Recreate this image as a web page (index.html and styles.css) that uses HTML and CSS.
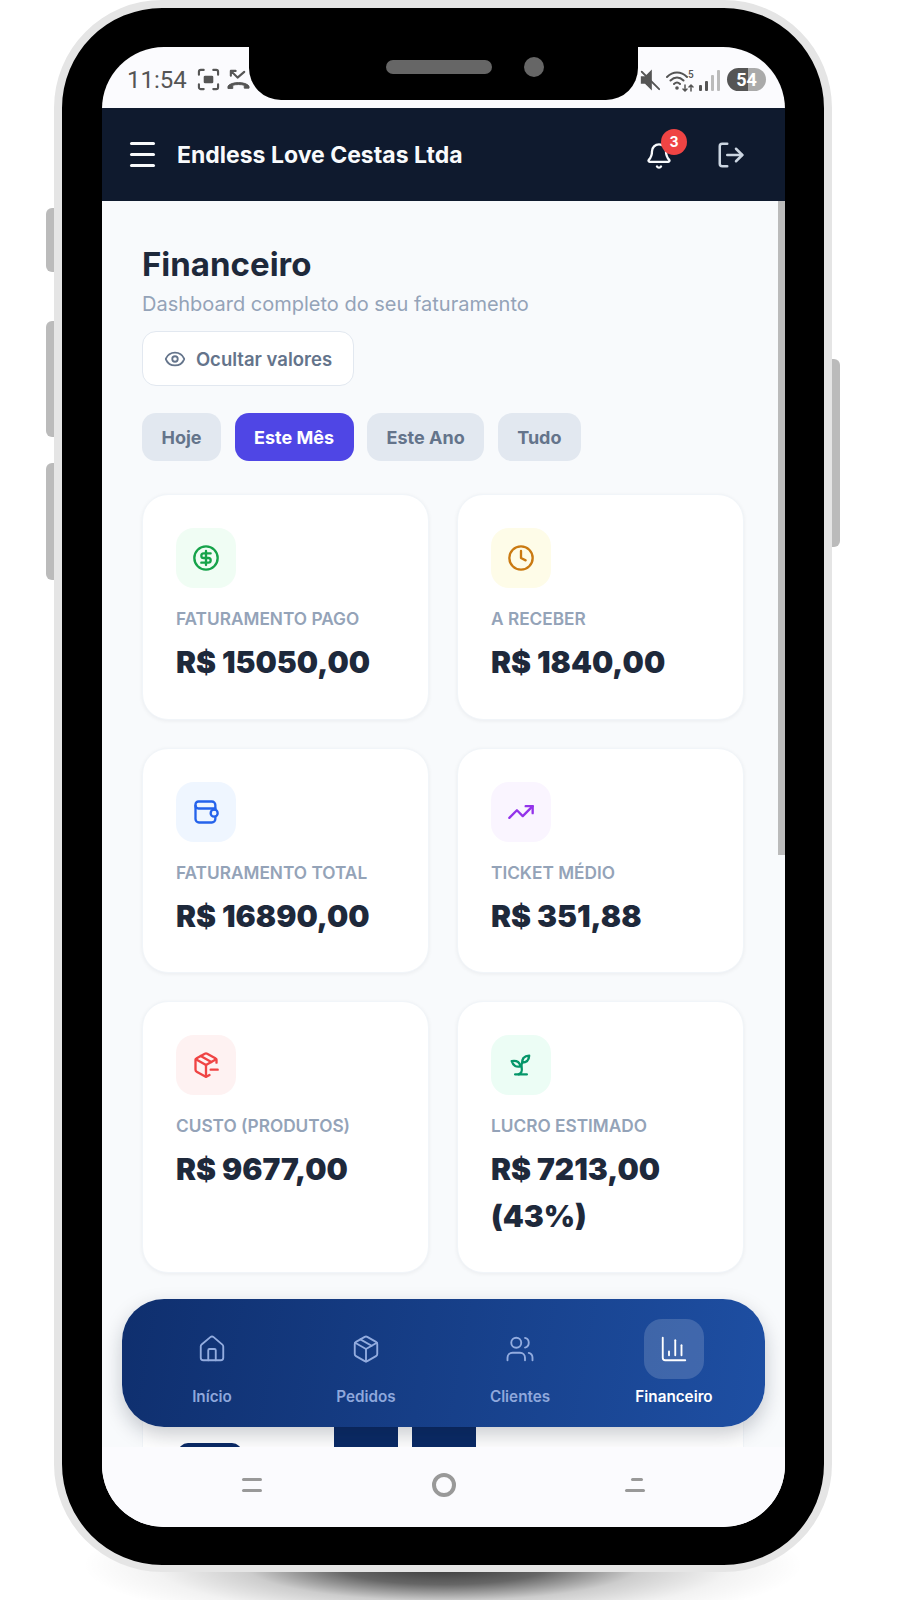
FILE: index.html
```html
<!DOCTYPE html>
<html lang="pt-BR">
<head>
    <meta charset="UTF-8">
    <meta name="viewport" content="width=device-width, initial-scale=1.0">
    <title>Financeiro</title>
    <link rel="stylesheet" href="styles.css">
</head>
<body>
    <div class="floor-shadow"></div>
    <div class="side-btn side-btn-a"></div>
    <div class="side-btn side-btn-b"></div>
    <div class="side-btn side-btn-c"></div>
    <div class="side-btn side-btn-d"></div>

    <div class="phone">
        <div class="screen">
            <div class="notch">
                <span class="speaker"></span>
                <span class="camera"></span>
            </div>

            <div class="status-bar">
                <div class="status-left">
                    <span class="clock">11:54</span>
                    <svg class="status-icon" viewBox="0 0 24 24" fill="none" stroke="#555" stroke-width="2.2" stroke-linecap="round">
                        <path d="M2 7V4a2 2 0 0 1 2-2h3M17 2h3a2 2 0 0 1 2 2v3M22 17v3a2 2 0 0 1-2 2h-3M7 22H4a2 2 0 0 1-2-2v-3"/>
                        <rect x="7" y="8" width="10" height="8" rx="1.5" fill="#555" stroke="none"/>
                    </svg>
                    <svg class="status-icon" viewBox="0 0 24 24" fill="none" stroke="#555" stroke-width="2.2" stroke-linecap="round" stroke-linejoin="round">
                        <path d="M4 3l7 7 7-6M4 3v5M4 3h5"/>
                        <path d="M1 21v-2c3-5 19-5 22 0v2h-5v-3c-3-1-9-1-12 0v3z" fill="#555" stroke-width="1"/>
                    </svg>
                </div>
                <div class="status-right">
                    <svg class="mute-icon" viewBox="0 0 24 24" fill="#555" stroke="#555" stroke-width="2" stroke-linecap="round">
                        <path d="M3 9v6h4l6 6V3L7 9z"/>
                        <path d="M3 3l19 19"/>
                    </svg>
                    <svg class="wifi-icon" viewBox="0 0 30 24" fill="none" stroke="#555" stroke-width="2" stroke-linecap="round">
                        <path d="M1 9c6-6 14-6 20 0M4.500 12.500c4-4 9-4 13 0M8 16c2-2 4-2 6 0"/>
                        <circle cx="11" cy="20" r="1.800" fill="#555" stroke="none"/>
                        <path d="M19 17v6M17 21l2 2 2-2M25 23v-6M23 19l2-2 2 2" stroke-width="1.500"/>
                        <text x="22" y="10" class="wifi-five">5</text>
                    </svg>
                    <div class="signal">
                        <span class="signal-bar signal-on signal-h1"></span>
                        <span class="signal-bar signal-on signal-h2"></span>
                        <span class="signal-bar signal-h3"></span>
                        <span class="signal-bar signal-h4"></span>
                    </div>
                    <div class="battery">54</div>
                </div>
            </div>

            <header class="topbar">
                <div class="burger"><span></span><span></span><span></span></div>
                <div class="company">Endless Love Cestas Ltda</div>
                <div class="bell">
                    <svg viewBox="0 0 24 24" fill="none" stroke="#f8fafc" stroke-width="2" stroke-linecap="round" stroke-linejoin="round">
                        <path d="M10.268 21a2 2 0 0 0 3.464 0"/>
                        <path d="M3.262 15.326A1 1 0 0 0 4 17h16a1 1 0 0 0 .74-1.673C19.410 13.956 18 12.499 18 8A6 6 0 0 0 6 8c0 4.499-1.411 5.956-2.738 7.326"/>
                    </svg>
                    <span class="badge">3</span>
                </div>
                <svg class="logout" viewBox="0 0 24 24" fill="none" stroke="#cbd5e1" stroke-width="2" stroke-linecap="round" stroke-linejoin="round">
                    <path d="M9 21H5a2 2 0 0 1-2-2V5a2 2 0 0 1 2-2h4"/>
                    <polyline points="16 17 21 12 16 7"/>
                    <line x1="21" y1="12" x2="9" y2="12"/>
                </svg>
            </header>

            <main class="content">
                <h1 class="page-title">Financeiro</h1>
                <p class="page-sub">Dashboard completo do seu faturamento</p>
                <button class="toggle-values">
                    <svg viewBox="0 0 24 24" fill="none" stroke="#64748b" stroke-width="2" stroke-linecap="round" stroke-linejoin="round">
                        <path d="M2.062 12.348a1 1 0 0 1 0-.696 10.750 10.750 0 0 1 19.876 0 1 1 0 0 1 0 .696 10.750 10.750 0 0 1-19.876 0"/>
                        <circle cx="12" cy="12" r="3"/>
                    </svg>
                    Ocultar valores
                </button>

                <div class="filters">
                    <button class="filter">Hoje</button>
                    <button class="filter filter-active">Este Mês</button>
                    <button class="filter">Este Ano</button>
                    <button class="filter">Tudo</button>
                </div>

                <div class="cards">
                    <div class="card">
                        <div class="tile tile-green">
                            <svg viewBox="0 0 24 24" fill="none" stroke="#16a34a" stroke-width="2" stroke-linecap="round" stroke-linejoin="round">
                                <circle cx="12" cy="12" r="10"/>
                                <path d="M16 8h-6a2 2 0 1 0 0 4h4a2 2 0 1 1 0 4H8"/>
                                <path d="M12 18V6"/>
                            </svg>
                        </div>
                        <div class="card-label">Faturamento Pago</div>
                        <div class="card-value">R$ 15050,00</div>
                    </div>
                    <div class="card">
                        <div class="tile tile-yellow">
                            <svg viewBox="0 0 24 24" fill="none" stroke="#ca7a12" stroke-width="2" stroke-linecap="round" stroke-linejoin="round">
                                <circle cx="12" cy="12" r="10"/>
                                <polyline points="12 6 12 12 16 14"/>
                            </svg>
                        </div>
                        <div class="card-label">A Receber</div>
                        <div class="card-value">R$ 1840,00</div>
                    </div>
                    <div class="card">
                        <div class="tile tile-blue">
                            <svg viewBox="0 0 24 24" fill="none" stroke="#2563eb" stroke-width="2" stroke-linecap="round" stroke-linejoin="round">
                                <path d="M20 10V6a3 3 0 0 0-3-3H5.500A2.500 2.500 0 0 0 3 5.500V18a3 3 0 0 0 3 3h11a3 3 0 0 0 3-3v-2"/>
                                <path d="M3 6.500A2.500 2.500 0 0 0 5.500 9H20"/>
                                <rect x="16" y="10" width="6" height="6" rx="3"/>
                            </svg>
                        </div>
                        <div class="card-label">Faturamento Total</div>
                        <div class="card-value">R$ 16890,00</div>
                    </div>
                    <div class="card">
                        <div class="tile tile-purple">
                            <svg viewBox="0 0 24 24" fill="none" stroke="#9333ea" stroke-width="2" stroke-linecap="round" stroke-linejoin="round">
                                <polyline points="22 7 13.500 15.500 8.500 10.500 2 17"/>
                                <polyline points="16 7 22 7 22 13"/>
                            </svg>
                        </div>
                        <div class="card-label">Ticket Médio</div>
                        <div class="card-value">R$ 351,88</div>
                    </div>
                    <div class="card">
                        <div class="tile tile-red">
                            <svg viewBox="0 0 24 24" fill="none" stroke="#ef4444" stroke-width="2" stroke-linecap="round" stroke-linejoin="round">
                                <path d="M16 16h6"/>
                                <path d="M21 10V8a2 2 0 0 0-1-1.730l-7-4a2 2 0 0 0-2 0l-7 4A2 2 0 0 0 3 8v8a2 2 0 0 0 1 1.730l7 4a2 2 0 0 0 2 0l2-1.140"/>
                                <path d="m7.500 4.270 9 5.150"/>
                                <polyline points="3.290 7 12 12 20.710 7"/>
                                <line x1="12" y1="22" x2="12" y2="12"/>
                            </svg>
                        </div>
                        <div class="card-label">Custo (Produtos)</div>
                        <div class="card-value">R$ 9677,00</div>
                    </div>
                    <div class="card">
                        <div class="tile tile-emerald">
                            <svg viewBox="0 0 24 24" fill="none" stroke="#059669" stroke-width="2" stroke-linecap="round" stroke-linejoin="round">
                                <path d="M7 20h10"/>
                                <path d="M10 20c5.500-2.500.8-6.400 3-10"/>
                                <path d="M9.500 9.400c1.100.8 1.800 2.200 2.300 3.700-2 .4-3.500.4-4.800-.3-1.200-.6-2.300-1.900-3-4.200 2.800-.5 4.400 0 5.500.8z"/>
                                <path d="M14.100 6a7 7 0 0 0-1.100 4c1.900-.1 3.300-.6 4.300-1.400 1-1 1.600-2.300 1.700-4.600-2.700.1-4 1-4.900 2z"/>
                            </svg>
                        </div>
                        <div class="card-label">Lucro Estimado</div>
                        <div class="card-value">R$ 7213,00 (43%)</div>
                    </div>
                </div>

                <div class="chart-card">
                    <div class="chart">
                        <div class="chart-bar" style="height: 80px"></div>
                        <div class="chart-bar" style="height: 0"></div>
                        <div class="chart-bar" style="height: 130px"></div>
                        <div class="chart-bar" style="height: 130px"></div>
                    </div>
                </div>
            </main>

            <div class="scrollbar"></div>

            <nav class="bottom-nav">
                <div class="nav-item">
                    <span class="nav-icon">
                        <svg viewBox="0 0 24 24"><path d="M15 21v-8a1 1 0 0 0-1-1h-4a1 1 0 0 0-1 1v8"/><path d="M3 10a2 2 0 0 1 .709-1.528l7-5.999a2 2 0 0 1 2.582 0l7 5.999A2 2 0 0 1 21 10v9a2 2 0 0 1-2 2H5a2 2 0 0 1-2-2z"/></svg>
                    </span>
                    <span class="nav-label">Início</span>
                </div>
                <div class="nav-item">
                    <span class="nav-icon">
                        <svg viewBox="0 0 24 24"><path d="M11 21.730a2 2 0 0 0 2 0l7-4A2 2 0 0 0 21 16V8a2 2 0 0 0-1-1.730l-7-4a2 2 0 0 0-2 0l-7 4A2 2 0 0 0 3 8v8a2 2 0 0 0 1 1.730z"/><path d="M12 22V12"/><polyline points="3.290 7 12 12 20.710 7"/><path d="m7.500 4.270 9 5.150"/></svg>
                    </span>
                    <span class="nav-label">Pedidos</span>
                </div>
                <div class="nav-item">
                    <span class="nav-icon">
                        <svg viewBox="0 0 24 24"><path d="M16 21v-2a4 4 0 0 0-4-4H6a4 4 0 0 0-4 4v2"/><circle cx="9" cy="7" r="4"/><path d="M22 21v-2a4 4 0 0 0-3-3.870"/><path d="M16 3.130a4 4 0 0 1 0 7.750"/></svg>
                    </span>
                    <span class="nav-label">Clientes</span>
                </div>
                <div class="nav-item nav-active">
                    <span class="nav-icon">
                        <svg viewBox="0 0 24 24"><path d="M3 3v16a2 2 0 0 0 2 2h16"/><path d="M18 17V9"/><path d="M13 17V5"/><path d="M8 17v-3"/></svg>
                    </span>
                    <span class="nav-label">Financeiro</span>
                </div>
            </nav>

            <div class="system-bar">
                <div class="sys-lines"><span></span><span></span></div>
                <div class="sys-home"></div>
                <div class="sys-lines sys-lines-short"><span></span><span></span></div>
            </div>
        </div>
    </div>
</body>
</html>
```

FILE: styles.css
```css
* {
    box-sizing: border-box;
}

body {
    margin: 0;
    width: 900px;
    height: 1600px;
    overflow: hidden;
    position: relative;
    background: #fff;
    font-family: "Inter", "Liberation Sans", sans-serif;
}

.floor-shadow {
    position: absolute;
    left: 83px;
    top: 1500px;
    width: 720px;
    height: 130px;
    background: radial-gradient(closest-side, rgba(0,0,0,0.8) 0%, rgba(0,0,0,0.6) 30%, rgba(0,0,0,0.2) 55%, rgba(0,0,0,0.05) 80%, rgba(0,0,0,0) 100%);
}

.side-btn {
    position: absolute;
    width: 8px;
    background: #bbb;
}

.side-btn-a { left: 46px; top: 208px; height: 64px; border-radius: 6px 0 0 6px; }
.side-btn-b { left: 46px; top: 321px; height: 116px; border-radius: 6px 0 0 6px; }
.side-btn-c { left: 46px; top: 463px; height: 117px; border-radius: 6px 0 0 6px; }
.side-btn-d { left: 832px; top: 359px; height: 188px; border-radius: 0 6px 6px 0; }

.phone {
    position: relative;
    margin-left: 54px;
    width: 778px;
    height: 1572px;
    padding: 39px 39px 38px 40px;
    background: #000;
    border: 8px solid #e5e5e5;
    border-bottom-width: 7px;
    border-radius: 108px;
}

.screen {
    position: relative;
    height: 100%;
    display: flex;
    flex-direction: column;
    overflow: hidden;
    background: #fbfbfe;
    border-radius: 62px;
}

.notch {
    position: absolute;
    top: 0;
    left: 147px;
    width: 389px;
    height: 53px;
    padding: 0 0 13px 137px;
    display: flex;
    align-items: center;
    gap: 32px;
    background: #000;
    border-radius: 0 0 32px 32px;
    z-index: 5;
}

.speaker {
    width: 106px;
    height: 14px;
    background: #666;
    border-radius: 7px;
}

.camera {
    width: 20px;
    height: 20px;
    background: #666;
    border-radius: 50%;
}

/* status bar */
.status-bar {
    height: 61px;
    flex-shrink: 0;
    padding: 4px 19px 0 25px;
    display: flex;
    justify-content: space-between;
    align-items: center;
}

.status-left,
.status-right {
    display: flex;
    align-items: center;
}

.clock {
    font-family: "Roboto", sans-serif;
    font-size: 24px;
    color: #555;
    margin-right: 10px;
}

.status-icon {
    width: 23px;
    height: 23px;
    margin-right: 7px;
}

.mute-icon {
    width: 22px;
    height: 22px;
    margin-right: 5px;
}

.wifi-icon {
    width: 30px;
    height: 24px;
    margin-right: 3px;
}

.wifi-five {
    font-family: "Roboto", sans-serif;
    font-size: 10px;
    font-weight: 500;
    fill: #555;
    stroke: none;
}

.signal {
    display: flex;
    align-items: flex-end;
    gap: 3px;
    height: 22px;
    margin-right: 7px;
}

.signal-bar {
    width: 3px;
    background: #bbb;
    border-radius: 1px;
}

.signal-on { background: #555; }
.signal-h1 { height: 6px; }
.signal-h2 { height: 10px; }
.signal-h3 { height: 16px; }
.signal-h4 { height: 21px; }

.battery {
    width: 39px;
    height: 23px;
    border-radius: 12px;
    background: linear-gradient(90deg, #555 0%, #555 54%, #aaa 54%, #aaa 100%);
    color: #fff;
    font-family: "Roboto", sans-serif;
    font-size: 18px;
    font-weight: 700;
    line-height: 23px;
    text-align: center;
}

/* header */
.topbar {
    height: 93px;
    flex-shrink: 0;
    padding: 0 39px 0 28px;
    display: flex;
    align-items: center;
    background: #0f1a2e;
}

.burger {
    width: 25px;
    display: flex;
    flex-direction: column;
    gap: 8.500px;
    margin-right: 22px;
}

.burger span {
    height: 2.500px;
    background: #f8fafc;
    border-radius: 2px;
}

.company {
    flex: 1;
    font-size: 23px;
    font-weight: 700;
    color: #f8fafc;
}

.bell {
    position: relative;
    top: 1px;
    width: 28px;
    height: 28px;
    margin-right: 43px;
}

.bell svg {
    display: block;
    width: 28px;
    height: 28px;
}

.badge {
    position: absolute;
    top: -13px;
    right: -14px;
    width: 26px;
    height: 26px;
    border-radius: 50%;
    background: #ef4444;
    color: #fff;
    font-size: 14px;
    font-weight: 700;
    line-height: 26px;
    text-align: center;
}

.logout {
    width: 30px;
    height: 30px;
}

/* content */
.content {
    flex: 1;
    min-height: 0;
    overflow: hidden;
    padding: 43px 41px 0 40px;
    background: #f8fafc;
}

.page-title {
    margin: 0;
    font-size: 33px;
    font-weight: 700;
    line-height: 40px;
    color: #1e293b;
}

.page-sub {
    margin: 8px 0 15px;
    font-size: 20px;
    line-height: 24px;
    color: #94a3b8;
}

.toggle-values {
    height: 55px;
    width: 212px;
    display: flex;
    align-items: center;
    justify-content: center;
    gap: 10px;
    padding: 0;
    background: #fff;
    border: 1.5px solid #e2e8f0;
    border-radius: 14px;
    font-family: inherit;
    font-size: 18.500px;
    font-weight: 600;
    color: #64748b;
}

.toggle-values svg {
    width: 22px;
    height: 22px;
}

.filters {
    display: flex;
    gap: 13.500px;
    margin: 27px 0 33px;
}

.filter {
    height: 48px;
    padding: 0 19.500px;
    background: #e2e8f0;
    border: none;
    border-radius: 14px;
    font-family: inherit;
    font-size: 18px;
    font-weight: 700;
    color: #64748b;
}

.filter-active {
    background: #4f46e5;
    color: #fff;
}

.cards {
    display: grid;
    grid-template-columns: repeat(2, 1fr);
    gap: 28px;
}

.card {
    padding: 33px 33px;
    background: #fff;
    border: 1px solid #f1f5f9;
    border-radius: 26px;
    box-shadow: 0 1px 4px rgba(15,23,42,0.06);
}

.tile {
    width: 60px;
    height: 60px;
    display: flex;
    align-items: center;
    justify-content: center;
    border-radius: 18px;
}

.tile svg {
    width: 28px;
    height: 28px;
}

.tile-green { background: #f0fdf4; }
.tile-yellow { background: #fefce8; }
.tile-blue { background: #eff6ff; }
.tile-purple { background: #faf5ff; }
.tile-red { background: #fef2f2; }
.tile-emerald { background: #ecfdf5; }

.card-label {
    margin-top: 19px;
    font-size: 17.250px;
    font-weight: 600;
    line-height: 24px;
    text-transform: uppercase;
    color: #94a3b8;
}

.card-value {
    margin-top: 8px;
    font-size: 30px;
    font-weight: 900;
    line-height: 46.500px;
    color: #1e293b;
}

.chart-card {
    margin-top: 29px;
    height: 300px;
    padding: 20px 35px 0;
    background: #fff;
    border: 1px solid #f1f5f9;
    border-radius: 26px;
}

.chart {
    height: 200px;
    display: flex;
    align-items: flex-end;
    gap: 14px;
}

.chart-bar {
    width: 64px;
    background: #0a2a66;
    border-radius: 10px 10px 0 0;
}

.scrollbar {
    position: absolute;
    top: 154px;
    right: 0;
    width: 7px;
    height: 654px;
    background: #bbb;
}

/* bottom nav */
.bottom-nav {
    position: absolute;
    left: 20px;
    right: 20px;
    bottom: 100px;
    height: 128px;
    padding: 20px 14px 0 13px;
    display: flex;
    background: linear-gradient(100deg, #0f2f6e 0%, #1e4fa3 100%);
    border-radius: 42px;
    box-shadow: 0 8px 20px rgba(15,23,42,0.22);
}

.nav-item {
    flex: 1;
    display: flex;
    flex-direction: column;
    align-items: center;
    gap: 8px;
}

.nav-icon {
    width: 60px;
    height: 60px;
    display: flex;
    align-items: center;
    justify-content: center;
    border-radius: 18px;
}

.nav-icon svg {
    width: 30px;
    height: 30px;
    fill: none;
    stroke: #93acdf;
    stroke-width: 1.500;
    stroke-linecap: round;
    stroke-linejoin: round;
}

.nav-label {
    font-size: 15.250px;
    font-weight: 600;
    line-height: 20px;
    color: #8fa8dc;
}

.nav-active .nav-icon {
    background: rgba(255,255,255,0.16);
}

.nav-active .nav-icon svg {
    stroke: #fff;
}

.nav-active .nav-label {
    color: #fff;
}

/* android nav */
.system-bar {
    position: relative;
    height: 80px;
    flex-shrink: 0;
    padding: 0 140px 5px 140px;
    display: flex;
    align-items: center;
    justify-content: space-between;
    background: #fbfbfe;
    z-index: 2;
}

.sys-lines {
    width: 20px;
    display: flex;
    flex-direction: column;
    align-items: center;
    gap: 8px;
}

.sys-lines span {
    width: 100%;
    height: 3px;
    background: #999;
    border-radius: 2px;
}

.sys-lines-short span:first-child {
    width: 60%;
    margin-left: 4px;
}

.sys-home {
    width: 24px;
    height: 24px;
    border: 4px solid #999;
    border-radius: 50%;
}
```
